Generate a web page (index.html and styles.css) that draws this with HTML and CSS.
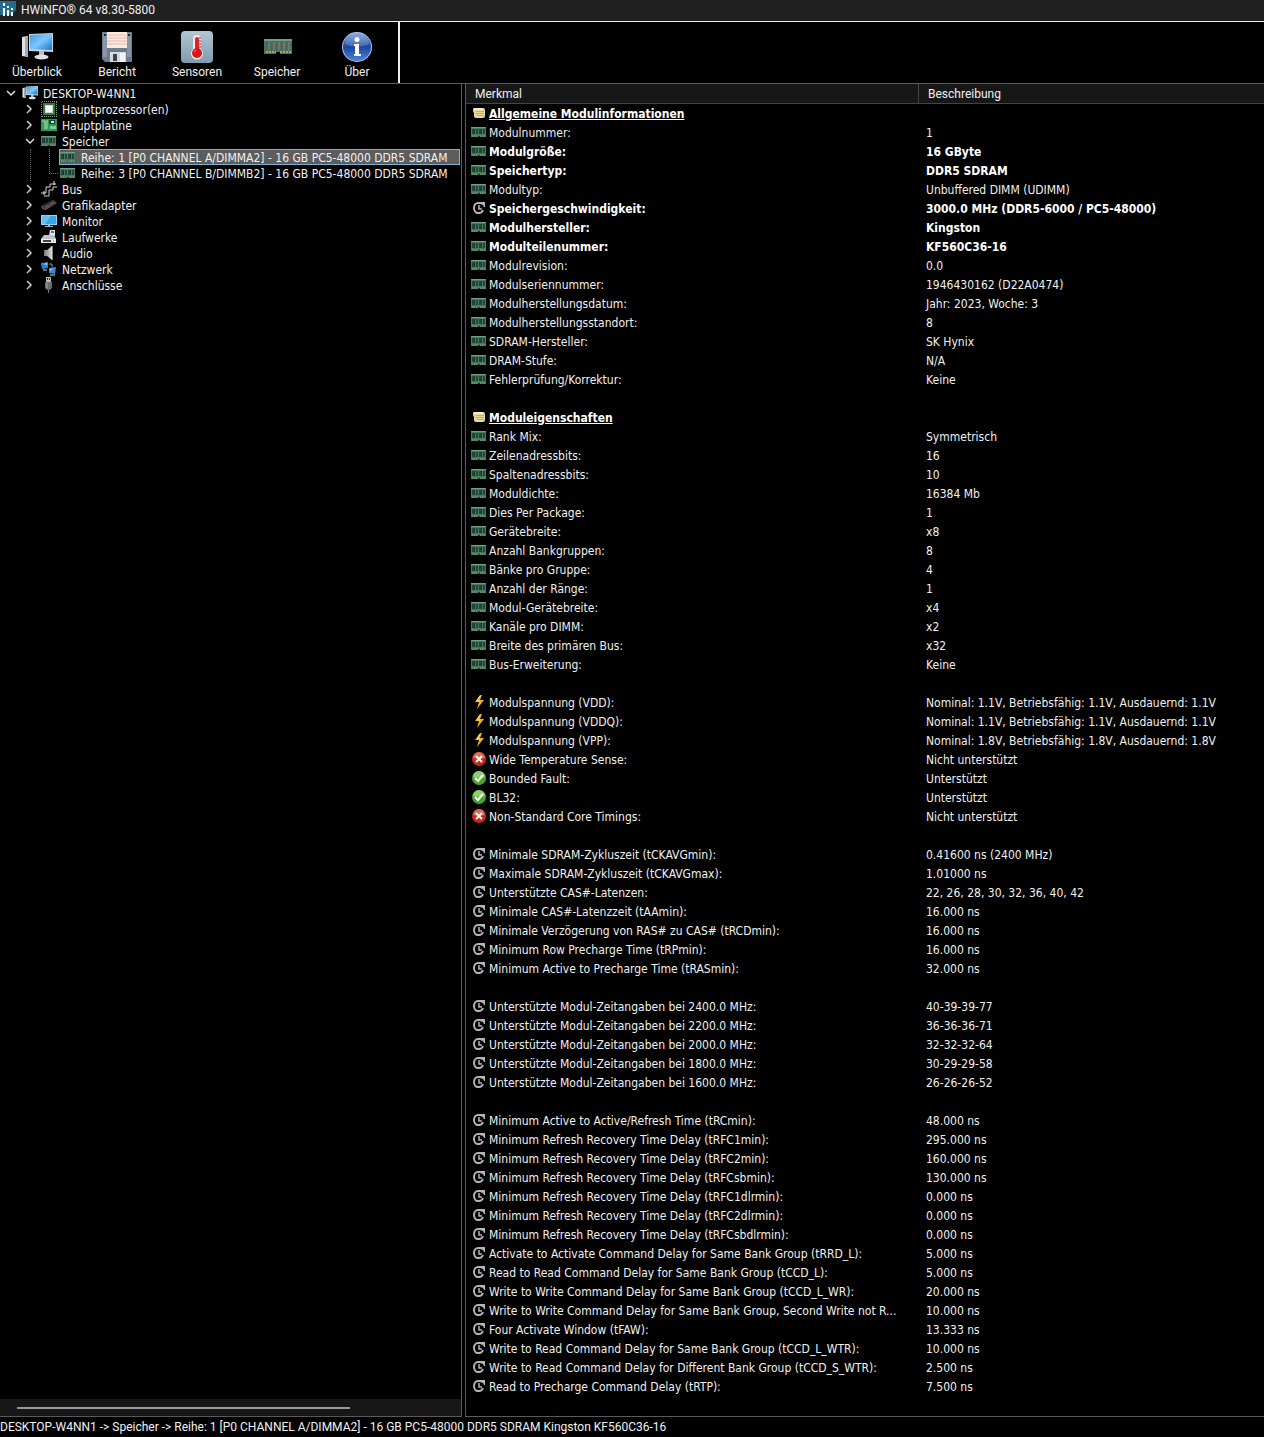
FILE: index.html
```html
<!DOCTYPE html>
<html lang="de">
<head>
  <meta charset="UTF-8">
  <meta name="viewport" content="width=device-width, initial-scale=1.0">
  <title>HWiNFO® 64 v8.30-5800</title>
  <link rel="stylesheet" href="styles.css">
</head>
<body>

<!-- Symbole -->
<svg class="sprite" aria-hidden="true">
  <defs>
    <linearGradient id="g-screen" x1="0" y1="0" x2="1" y2="1">
      <stop offset="0" stop-color="#3f9be6"/><stop offset=".5" stop-color="#7cc6fa"/><stop offset="1" stop-color="#1c71cc"/>
    </linearGradient>
    <linearGradient id="g-temp" x1="0" y1="0" x2="0" y2="1">
      <stop offset="0" stop-color="#b3c6d4"/><stop offset="1" stop-color="#7f9bb0"/>
    </linearGradient>
    <linearGradient id="g-info" x1="0" y1="0" x2="0" y2="1">
      <stop offset="0" stop-color="#6f97dc"/><stop offset=".5" stop-color="#1d479f"/><stop offset="1" stop-color="#4a86d8"/>
    </linearGradient>
    <linearGradient id="g-audio" x1="0" y1="0" x2="1" y2="0">
      <stop offset="0" stop-color="#777"/><stop offset="1" stop-color="#ddd"/>
    </linearGradient>
  </defs>
  <symbol id="logo" viewBox="0 0 16 16">
    <path d="M0 1h16v9l-5 5H0z" fill="#256b8b"/>
    <path d="M4 3v3M4 8v8M8 6v2M8 10v6M12 8v2M12 12v4" stroke="#fff" stroke-width="2"/>
  </symbol>
  <symbol id="pc" viewBox="0 0 32 32">
    <path d="M1 6l6-1v21l-6-1z" fill="#dfe3e6"/><path d="M4 6l3-1v21l-3-1z" fill="#a3abb2"/>
    <path d="M8 3l24-1v19L8 20z" fill="#c3d5e3"/>
    <path d="M9 4l22-1v16L9 18z" fill="url(#g-screen)"/>
    <path d="M18 20h5v5h-5z" fill="#b8c0c6"/><ellipse cx="20.500" cy="26" rx="7" ry="2.500" fill="#dde2e6"/>
  </symbol>
  <symbol id="disk" viewBox="0 0 32 32">
    <path d="M1 1h30v30H4l-3-3z" fill="#6d7c8e"/>
    <path d="M2 2h4v24H2zM26 2h4v24h-4z" fill="#8797a9"/>
    <path d="M6 1h20v16H6z" fill="#fae9e1"/>
    <path d="M6 4h20M6 7h20M6 10h20M6 13h20" stroke="#e6b8ab"/>
    <path d="M9 21h16v10H9z" fill="#d5dade"/><path d="M12 23h4v7h-4z" fill="#3c4651"/><path d="M19 22h5v9h-5z" fill="#f2f4f5"/>
    <path d="M3 3h2v2H3zM27 3h2v2h-2z" fill="#222"/>
  </symbol>
  <symbol id="temp" viewBox="0 0 32 32">
    <rect width="32" height="32" rx="4" fill="url(#g-temp)"/>
    <path d="M12 8a4 4 0 0 1 8 0v10a6 6 0 1 1-8 0z" fill="#f4e9e9"/>
    <path d="M14 8a2 2 0 0 1 4 0v11h-4z" fill="#e02327"/><circle cx="16" cy="22" r="5" fill="#d9151b"/>
    <path d="M18 7h2M18 10h2M18 13h2M18 16h2" stroke="#8d2b2b"/>
    <path d="M13 21a3 3 0 0 1 2-2" stroke="#ff8b8b" fill="none"/>
  </symbol>
  <symbol id="ram-big" viewBox="0 0 32 32">
    <path d="M3 8h28v15H19v-2h-4v2H3z" fill="#46755f"/>
    <path d="M3 9h28" stroke="#6c9d86" stroke-width="2"/>
    <path d="M5 11h4v8H5zM10 11h4v8h-4zM15 11h4v8h-4zM20 11h4v8h-4zM25 11h4v8h-4z" fill="#6b776f"/>
    <path d="M6 11v8M11 11v8M16 11v8M21 11v8M26 11v8" stroke="#3d4d45"/>
    <path d="M5 21h10M19 21h11" stroke="#baa04c" stroke-width="2" stroke-dasharray="2 1"/>
  </symbol>
  <symbol id="info" viewBox="0 0 32 32">
    <circle cx="16" cy="16" r="15" fill="#b1c5e8"/><circle cx="16" cy="16" r="14" fill="url(#g-info)"/>
    <path d="M4 13a12 11 0 0 1 24 0q-12 5-24 0z" fill="#fff" opacity=".18"/>
    <circle cx="16" cy="8.500" r="2.500" fill="#fff"/>
    <path d="M13 13h5v10h2v2h-7v-2h1v-8h-1z" fill="#fff"/>
  </symbol>
  <symbol id="ram" viewBox="0 0 16 16">
    <path d="M0 3h15v10H9l-1-1-1 1H0z" fill="#47795f"/>
    <path d="M0 3h15v1H0z" fill="#6f9f86"/>
    <path d="M1 5h3v5H1zM5 5h2v5H5zM8 5h3v5H8zM12 5h2v5h-2z" fill="#16392b"/>
    <path d="M2 5v5M6 5v5M9 5v5M13 5v5" stroke="#2f5b47"/>
    <path d="M1 12h6M9 12h5" stroke="#8aab87" stroke-dasharray="1 1"/>
  </symbol>
  <symbol id="cpu" viewBox="0 0 16 16">
    <path d="M1 .500h15M1 15.500h15M.500 1v15M15.500 1v15" stroke="#69a874" stroke-dasharray="1 1"/>
    <path d="M2 2h12v12H2z" fill="#3f7350"/><path d="M4 4h8v8H4z" fill="#c9dccb"/><path d="M5 5h6v6H5z" fill="#f5f8f5"/>
  </symbol>
  <symbol id="board" viewBox="0 0 16 16">
    <path d="M0 2h16v12H0z" fill="#2f9a57"/>
    <path d="M1 4h3v8M6 3v9" stroke="#b9e2bf" fill="none"/>
    <path d="M8 3h6v4H8z" fill="#123f27"/><path d="M9 9h6v3H9z" fill="#7fcb8d"/><path d="M10 4h3v2h-3z" fill="#d3ead6"/>
  </symbol>
  <symbol id="bus" viewBox="0 0 16 16">
    <path d="M0 12h5V6h4V3h6M3 15h5V9h4V6h4" stroke="#d2d2d2" fill="none"/>
    <path d="M13 0v4M3 10v4" stroke="#eee"/>
  </symbol>
  <symbol id="gpu" viewBox="0 0 16 16">
    <path d="M0 9l12-6 4 3-11 7-4-1z" fill="#59484b"/><path d="M1 9l11-6 3 1L4 11z" fill="#332b2d"/>
    <path d="M4 10l4-2M9 7l4-2" stroke="#85646a"/>
  </symbol>
  <symbol id="monitor" viewBox="0 0 16 16">
    <path d="M0 2h16v10H0z" fill="#8bd1f8"/><path d="M1 3h14v8H1z" fill="#35a4ea"/><path d="M1 3h9L4 11H1z" fill="#66c0f5"/>
    <path d="M7 12h2v1h3v1H4v-1h3z" fill="#a9b8c2"/>
  </symbol>
  <symbol id="drive" viewBox="0 0 16 16">
    <path d="M9 1h5v6H8z" fill="#dfe6ec"/><path d="M10 2h3v2h-3z" fill="#5c7488"/>
    <path d="M3 6h10l2 4H0z" fill="#bfc4c7"/><path d="M0 10h15v4H0z" fill="#e6e8e9"/><path d="M2 12h8" stroke="#444" stroke-width="2"/><path d="M12 12h1" stroke="#3ba454"/>
  </symbol>
  <symbol id="audio" viewBox="0 0 16 16">
    <path d="M3 5h3l5-4v14l-5-4H3z" fill="url(#g-audio)"/><path d="M11 1v14" stroke="#eee"/>
  </symbol>
  <symbol id="net" viewBox="0 0 16 16">
    <path d="M0 2l7-1v6l-6 1z" fill="#2f7fca"/><path d="M2 3l4-1v2z" fill="#9ad2f5"/><path d="M2 9h4" stroke="#cbd4da"/>
    <path d="M8 7l7-1-1 7-6-1z" fill="#3688d1"/><path d="M9 8l4-1-4 3z" fill="#9ad2f5"/><path d="M9 14h5" stroke="#cbd4da"/>
    <path d="M8 3h3v3" stroke="#8a98a2" fill="none"/>
  </symbol>
  <symbol id="port" viewBox="0 0 16 16">
    <path d="M5 0h5v5H5z" fill="#b9b9b9"/><path d="M6 1h1v2H6zM8 1h1v2H8z" fill="#333"/>
    <path d="M4 5h7v6l-2 2H6l-2-2z" fill="#6b6b6b"/><path d="M5 6h2v5H5z" fill="#8c8c8c"/><path d="M7.500 13v3" stroke="#777"/>
  </symbol>
  <symbol id="note" viewBox="0 0 16 16">
    <path d="M3 3h9q2 0 2 2v6q0 2-2 2H5q-2 0-2-2V8Q2 8 2 5z" fill="#e9d69b"/>
    <path d="M2 5q0-2 2-2h8v2z" fill="#f8edc7"/>
    <path d="M5 6.500h8M5 8.500h8M6 10.500h7" stroke="#c4ad70"/>
  </symbol>
  <symbol id="clock" viewBox="0 0 16 16">
    <path d="M9 3H7a4 5 0 0 0 0 10h1q3 0 4-3" stroke="#b5b5b5" stroke-width="2" fill="none"/>
    <path d="M9 2h5v5h-1l-1-2-3-1z" fill="#b5b5b5"/>
    <path d="M8 5v4h3" stroke="#b5b5b5" stroke-width="1.500" fill="none"/>
  </symbol>
  <symbol id="volt" viewBox="0 0 16 16">
    <path d="M9 1h2l-2 5h4L6 15l2-7H4z" fill="#eeb024"/><path d="M9 2L6 7h3" stroke="#fbdc72" fill="none"/>
  </symbol>
  <symbol id="no" viewBox="0 0 16 16">
    <circle cx="8" cy="8" r="7" fill="#c6261e"/><path d="M2 7a6 6 0 0 1 12 0q-6 2-12 0z" fill="#e06656"/>
    <path d="M5 5l6 6M11 5l-6 6" stroke="#fff" stroke-width="2"/>
  </symbol>
  <symbol id="yes" viewBox="0 0 16 16">
    <circle cx="8" cy="8" r="7" fill="#45a52d"/><path d="M2 7a6 6 0 0 1 12 0q-6 2-12 0z" fill="#8bd06c"/>
    <path d="M4 8l3 3 5-6" stroke="#fff" stroke-width="2" fill="none"/>
  </symbol>
  <symbol id="open" viewBox="0 0 10 10"><path d="M1 3l4 4 4-4" stroke="#ddd" stroke-width="1.500" fill="none"/></symbol>
  <symbol id="closed" viewBox="0 0 10 10"><path d="M2 1l4 4-4 4" stroke="#ccc" stroke-width="1.500" fill="none"/></symbol>
</svg>

<header class="titlebar">
  <svg class="icon"><use href="#logo"/></svg>
  <h1>HWiNFO® 64 v8.30-5800</h1>
</header>

<nav class="toolbar">
  <div class="tools">
    <button type="button"><svg><use href="#pc"/></svg>Überblick</button>
    <button type="button"><svg><use href="#disk"/></svg>Bericht</button>
    <button type="button"><svg><use href="#temp"/></svg>Sensoren</button>
    <button type="button"><svg><use href="#ram-big"/></svg>Speicher</button>
    <button type="button"><svg><use href="#info"/></svg>Über</button>
  </div>
</nav>

<main class="panes">
  <!-- Gerätebaum -->
  <aside class="sidebar">
    <ul class="tree">
      <li>
        <div class="node"><button type="button" aria-label="Zuklappen"><svg><use href="#open"/></svg></button><svg class="icon"><use href="#pc"/></svg><span>DESKTOP-W4NN1</span></div>
        <ul>
          <li><div class="node"><button type="button" aria-label="Aufklappen"><svg><use href="#closed"/></svg></button><svg class="icon"><use href="#cpu"/></svg><span>Hauptprozessor(en)</span></div></li>
          <li><div class="node"><button type="button" aria-label="Aufklappen"><svg><use href="#closed"/></svg></button><svg class="icon"><use href="#board"/></svg><span>Hauptplatine</span></div></li>
          <li>
            <div class="node"><button type="button" aria-label="Zuklappen"><svg><use href="#open"/></svg></button><svg class="icon"><use href="#ram"/></svg><span>Speicher</span></div>
            <ul class="modules">
              <li><div class="node selected"><svg class="icon"><use href="#ram"/></svg><span>Reihe: 1 [P0 CHANNEL A/DIMMA2] - 16 GB PC5-48000 DDR5 SDRAM</span></div></li>
              <li><div class="node"><svg class="icon"><use href="#ram"/></svg><span>Reihe: 3 [P0 CHANNEL B/DIMMB2] - 16 GB PC5-48000 DDR5 SDRAM</span></div></li>
            </ul>
          </li>
          <li><div class="node"><button type="button" aria-label="Aufklappen"><svg><use href="#closed"/></svg></button><svg class="icon"><use href="#bus"/></svg><span>Bus</span></div></li>
          <li><div class="node"><button type="button" aria-label="Aufklappen"><svg><use href="#closed"/></svg></button><svg class="icon"><use href="#gpu"/></svg><span>Grafikadapter</span></div></li>
          <li><div class="node"><button type="button" aria-label="Aufklappen"><svg><use href="#closed"/></svg></button><svg class="icon"><use href="#monitor"/></svg><span>Monitor</span></div></li>
          <li><div class="node"><button type="button" aria-label="Aufklappen"><svg><use href="#closed"/></svg></button><svg class="icon"><use href="#drive"/></svg><span>Laufwerke</span></div></li>
          <li><div class="node"><button type="button" aria-label="Aufklappen"><svg><use href="#closed"/></svg></button><svg class="icon"><use href="#audio"/></svg><span>Audio</span></div></li>
          <li><div class="node"><button type="button" aria-label="Aufklappen"><svg><use href="#closed"/></svg></button><svg class="icon"><use href="#net"/></svg><span>Netzwerk</span></div></li>
          <li><div class="node"><button type="button" aria-label="Aufklappen"><svg><use href="#closed"/></svg></button><svg class="icon"><use href="#port"/></svg><span>Anschlüsse</span></div></li>
        </ul>
      </li>
    </ul>
    <div class="scrollbar"><div class="thumb"></div></div>
  </aside>

  <!-- Eigenschaften des gewählten Moduls -->
  <section class="details">
    <table>
      <colgroup><col class="col-name"><col></colgroup>
      <thead>
        <tr><th>Merkmal</th><th>Beschreibung</th></tr>
      </thead>
      <tbody>
        <tr class="group"><td><svg class="icon"><use href="#note"/></svg><span>Allgemeine Modulinformationen</span></td><td></td></tr>
        <tr><td><svg class="icon"><use href="#ram"/></svg><span>Modulnummer:</span></td><td>1</td></tr>
        <tr class="strong"><td><svg class="icon"><use href="#ram"/></svg><span>Modulgröße:</span></td><td>16 GByte</td></tr>
        <tr class="strong"><td><svg class="icon"><use href="#ram"/></svg><span>Speichertyp:</span></td><td>DDR5 SDRAM</td></tr>
        <tr><td><svg class="icon"><use href="#ram"/></svg><span>Modultyp:</span></td><td>Unbuffered DIMM (UDIMM)</td></tr>
        <tr class="strong"><td><svg class="icon"><use href="#clock"/></svg><span>Speichergeschwindigkeit:</span></td><td>3000.0 MHz (DDR5-6000 / PC5-48000)</td></tr>
        <tr class="strong"><td><svg class="icon"><use href="#ram"/></svg><span>Modulhersteller:</span></td><td>Kingston</td></tr>
        <tr class="strong"><td><svg class="icon"><use href="#ram"/></svg><span>Modulteilenummer:</span></td><td>KF560C36-16</td></tr>
        <tr><td><svg class="icon"><use href="#ram"/></svg><span>Modulrevision:</span></td><td>0.0</td></tr>
        <tr><td><svg class="icon"><use href="#ram"/></svg><span>Modulseriennummer:</span></td><td>1946430162 (D22A0474)</td></tr>
        <tr><td><svg class="icon"><use href="#ram"/></svg><span>Modulherstellungsdatum:</span></td><td>Jahr: 2023, Woche: 3</td></tr>
        <tr><td><svg class="icon"><use href="#ram"/></svg><span>Modulherstellungsstandort:</span></td><td>8</td></tr>
        <tr><td><svg class="icon"><use href="#ram"/></svg><span>SDRAM-Hersteller:</span></td><td>SK Hynix</td></tr>
        <tr><td><svg class="icon"><use href="#ram"/></svg><span>DRAM-Stufe:</span></td><td>N/A</td></tr>
        <tr><td><svg class="icon"><use href="#ram"/></svg><span>Fehlerprüfung/Korrektur:</span></td><td>Keine</td></tr>
        <tr><td></td><td></td></tr>
        <tr class="group"><td><svg class="icon"><use href="#note"/></svg><span>Moduleigenschaften</span></td><td></td></tr>
        <tr><td><svg class="icon"><use href="#ram"/></svg><span>Rank Mix:</span></td><td>Symmetrisch</td></tr>
        <tr><td><svg class="icon"><use href="#ram"/></svg><span>Zeilenadressbits:</span></td><td>16</td></tr>
        <tr><td><svg class="icon"><use href="#ram"/></svg><span>Spaltenadressbits:</span></td><td>10</td></tr>
        <tr><td><svg class="icon"><use href="#ram"/></svg><span>Moduldichte:</span></td><td>16384 Mb</td></tr>
        <tr><td><svg class="icon"><use href="#ram"/></svg><span>Dies Per Package:</span></td><td>1</td></tr>
        <tr><td><svg class="icon"><use href="#ram"/></svg><span>Gerätebreite:</span></td><td>x8</td></tr>
        <tr><td><svg class="icon"><use href="#ram"/></svg><span>Anzahl Bankgruppen:</span></td><td>8</td></tr>
        <tr><td><svg class="icon"><use href="#ram"/></svg><span>Bänke pro Gruppe:</span></td><td>4</td></tr>
        <tr><td><svg class="icon"><use href="#ram"/></svg><span>Anzahl der Ränge:</span></td><td>1</td></tr>
        <tr><td><svg class="icon"><use href="#ram"/></svg><span>Modul-Gerätebreite:</span></td><td>x4</td></tr>
        <tr><td><svg class="icon"><use href="#ram"/></svg><span>Kanäle pro DIMM:</span></td><td>x2</td></tr>
        <tr><td><svg class="icon"><use href="#ram"/></svg><span>Breite des primären Bus:</span></td><td>x32</td></tr>
        <tr><td><svg class="icon"><use href="#ram"/></svg><span>Bus-Erweiterung:</span></td><td>Keine</td></tr>
        <tr><td></td><td></td></tr>
        <tr><td><svg class="icon"><use href="#volt"/></svg><span>Modulspannung (VDD):</span></td><td>Nominal: 1.1V, Betriebsfähig: 1.1V, Ausdauernd: 1.1V</td></tr>
        <tr><td><svg class="icon"><use href="#volt"/></svg><span>Modulspannung (VDDQ):</span></td><td>Nominal: 1.1V, Betriebsfähig: 1.1V, Ausdauernd: 1.1V</td></tr>
        <tr><td><svg class="icon"><use href="#volt"/></svg><span>Modulspannung (VPP):</span></td><td>Nominal: 1.8V, Betriebsfähig: 1.8V, Ausdauernd: 1.8V</td></tr>
        <tr><td><svg class="icon"><use href="#no"/></svg><span>Wide Temperature Sense:</span></td><td>Nicht unterstützt</td></tr>
        <tr><td><svg class="icon"><use href="#yes"/></svg><span>Bounded Fault:</span></td><td>Unterstützt</td></tr>
        <tr><td><svg class="icon"><use href="#yes"/></svg><span>BL32:</span></td><td>Unterstützt</td></tr>
        <tr><td><svg class="icon"><use href="#no"/></svg><span>Non-Standard Core Timings:</span></td><td>Nicht unterstützt</td></tr>
        <tr><td></td><td></td></tr>
        <tr><td><svg class="icon"><use href="#clock"/></svg><span>Minimale SDRAM-Zykluszeit (tCKAVGmin):</span></td><td>0.41600 ns (2400 MHz)</td></tr>
        <tr><td><svg class="icon"><use href="#clock"/></svg><span>Maximale SDRAM-Zykluszeit (tCKAVGmax):</span></td><td>1.01000 ns</td></tr>
        <tr><td><svg class="icon"><use href="#clock"/></svg><span>Unterstützte CAS#-Latenzen:</span></td><td>22, 26, 28, 30, 32, 36, 40, 42</td></tr>
        <tr><td><svg class="icon"><use href="#clock"/></svg><span>Minimale CAS#-Latenzzeit (tAAmin):</span></td><td>16.000 ns</td></tr>
        <tr><td><svg class="icon"><use href="#clock"/></svg><span>Minimale Verzögerung von RAS# zu CAS# (tRCDmin):</span></td><td>16.000 ns</td></tr>
        <tr><td><svg class="icon"><use href="#clock"/></svg><span>Minimum Row Precharge Time (tRPmin):</span></td><td>16.000 ns</td></tr>
        <tr><td><svg class="icon"><use href="#clock"/></svg><span>Minimum Active to Precharge Time (tRASmin):</span></td><td>32.000 ns</td></tr>
        <tr><td></td><td></td></tr>
        <tr><td><svg class="icon"><use href="#clock"/></svg><span>Unterstützte Modul-Zeitangaben bei 2400.0 MHz:</span></td><td>40-39-39-77</td></tr>
        <tr><td><svg class="icon"><use href="#clock"/></svg><span>Unterstützte Modul-Zeitangaben bei 2200.0 MHz:</span></td><td>36-36-36-71</td></tr>
        <tr><td><svg class="icon"><use href="#clock"/></svg><span>Unterstützte Modul-Zeitangaben bei 2000.0 MHz:</span></td><td>32-32-32-64</td></tr>
        <tr><td><svg class="icon"><use href="#clock"/></svg><span>Unterstützte Modul-Zeitangaben bei 1800.0 MHz:</span></td><td>30-29-29-58</td></tr>
        <tr><td><svg class="icon"><use href="#clock"/></svg><span>Unterstützte Modul-Zeitangaben bei 1600.0 MHz:</span></td><td>26-26-26-52</td></tr>
        <tr><td></td><td></td></tr>
        <tr><td><svg class="icon"><use href="#clock"/></svg><span>Minimum Active to Active/Refresh Time (tRCmin):</span></td><td>48.000 ns</td></tr>
        <tr><td><svg class="icon"><use href="#clock"/></svg><span>Minimum Refresh Recovery Time Delay (tRFC1min):</span></td><td>295.000 ns</td></tr>
        <tr><td><svg class="icon"><use href="#clock"/></svg><span>Minimum Refresh Recovery Time Delay (tRFC2min):</span></td><td>160.000 ns</td></tr>
        <tr><td><svg class="icon"><use href="#clock"/></svg><span>Minimum Refresh Recovery Time Delay (tRFCsbmin):</span></td><td>130.000 ns</td></tr>
        <tr><td><svg class="icon"><use href="#clock"/></svg><span>Minimum Refresh Recovery Time Delay (tRFC1dlrmin):</span></td><td>0.000 ns</td></tr>
        <tr><td><svg class="icon"><use href="#clock"/></svg><span>Minimum Refresh Recovery Time Delay (tRFC2dlrmin):</span></td><td>0.000 ns</td></tr>
        <tr><td><svg class="icon"><use href="#clock"/></svg><span>Minimum Refresh Recovery Time Delay (tRFCsbdlrmin):</span></td><td>0.000 ns</td></tr>
        <tr><td><svg class="icon"><use href="#clock"/></svg><span>Activate to Activate Command Delay for Same Bank Group (tRRD_L):</span></td><td>5.000 ns</td></tr>
        <tr><td><svg class="icon"><use href="#clock"/></svg><span>Read to Read Command Delay for Same Bank Group (tCCD_L):</span></td><td>5.000 ns</td></tr>
        <tr><td><svg class="icon"><use href="#clock"/></svg><span>Write to Write Command Delay for Same Bank Group (tCCD_L_WR):</span></td><td>20.000 ns</td></tr>
        <tr><td><svg class="icon"><use href="#clock"/></svg><span>Write to Write Command Delay for Same Bank Group, Second Write not R...</span></td><td>10.000 ns</td></tr>
        <tr><td><svg class="icon"><use href="#clock"/></svg><span>Four Activate Window (tFAW):</span></td><td>13.333 ns</td></tr>
        <tr><td><svg class="icon"><use href="#clock"/></svg><span>Write to Read Command Delay for Same Bank Group (tCCD_L_WTR):</span></td><td>10.000 ns</td></tr>
        <tr><td><svg class="icon"><use href="#clock"/></svg><span>Write to Read Command Delay for Different Bank Group (tCCD_S_WTR):</span></td><td>2.500 ns</td></tr>
        <tr><td><svg class="icon"><use href="#clock"/></svg><span>Read to Precharge Command Delay (tRTP):</span></td><td>7.500 ns</td></tr>
      </tbody>
    </table>
  </section>
</main>

<footer class="statusbar">DESKTOP-W4NN1 -&gt; Speicher -&gt; Reihe: 1 [P0 CHANNEL A/DIMMA2] - 16 GB PC5-48000 DDR5 SDRAM Kingston KF560C36-16</footer>

</body>
</html>
```
FILE: styles.css
```css
* {
  box-sizing: border-box;
}
body {
  margin: 0;
  min-height: 100vh;
  display: flex;
  flex-direction: column;
  background: #000;
  color: #f0f0f0;
  font-family: "DejaVu Sans Condensed", "DejaVu Sans", sans-serif;
  font-size: 12px;
  line-height: 16px;
  white-space: nowrap;
}
ul {
  list-style: none;
  margin: 0;
  padding: 0;
}
button {
  padding: 0;
  border: 0;
  background: none;
  color: inherit;
  font: inherit;
}
.sprite {
  position: absolute;
  width: 0;
  height: 0;
}
.icon {
  width: 16px;
  height: 16px;
  flex: none;
}
/* Titelleiste */
.titlebar {
  display: flex;
  gap: 5px;
  height: 22px;
  background: #202020;
  border-bottom: 1px solid #eee;
}
.titlebar h1 {
  margin: 0;
  font: 12px/20px Roboto, "Noto Sans", sans-serif;
}
/* Werkzeugleiste */
.toolbar {
  border-bottom: 1px solid #5a5a5a;
  font-family: Roboto, "Noto Sans", sans-serif;
}
.tools {
  display: flex;
  gap: 6px;
  width: 400px;
  height: 61px;
  padding-top: 9px;
  border-right: 2px solid #eee;
}
.tools button {
  width: 74px;
  display: flex;
  flex-direction: column;
  align-items: center;
  line-height: 18px;
}
.tools svg {
  width: 32px;
  height: 32px;
}
/* Hauptbereich */
.panes {
  flex: 1;
  display: grid;
  grid-template-columns: 462px 1fr;
  gap: 3px;
}
.sidebar {
  display: flex;
  flex-direction: column;
  border-right: 1px solid #5a5a5a;
  border-bottom: 1px solid #5a5a5a;
  overflow: hidden;
}
.tree {
  flex: 1;
  padding: 1px 1px 0 3px;
}
.tree ul {
  position: relative;
  padding-left: 19px;
}
.node {
  display: flex;
  align-items: center;
  height: 16px;
}
.node button {
  width: 16px;
  height: 16px;
  margin-right: 3px;
  display: flex;
  align-items: center;
  justify-content: center;
}
.node button svg {
  width: 10px;
  height: 10px;
}
.node span {
  padding: 2px 0 0 5px;
}
/* gepunktete Linien vor den Modulen */
.tree .modules {
  margin-left: 8px;
  padding-left: 28px;
  border-left: 1px dotted #666;
}
.modules::before {
  content: "";
  position: absolute;
  left: 18px;
  top: 0;
  height: 24px;
  width: 8px;
  border-left: 1px dotted #777;
  border-bottom: 1px dotted #777;
}
.modules .node {
  padding-left: 1px;
}
.selected {
  background: #5d5d5d;
  outline: 1px solid #7fb0cc;
  outline-offset: -1px;
}
.scrollbar {
  height: 17px;
  padding: 8px 111px 0 17px;
  background: #171717;
}
.thumb {
  height: 2px;
  background: #9a9a9a;
}
/* Tabelle */
.details {
  border-left: 1px solid #5a5a5a;
  border-bottom: 1px solid #5a5a5a;
}
table {
  width: 100%;
  table-layout: fixed;
  border-collapse: separate;
  border-spacing: 0;
}
.col-name {
  width: 453px;
}
th {
  height: 20px;
  padding: 0 9px;
  background: #171717;
  border-right: 1px solid #444;
  border-bottom: 1px solid #444;
  font-family: Roboto, "Noto Sans", sans-serif;
  font-weight: normal;
  text-align: left;
}
th:last-child {
  border-right: 0;
}
td {
  height: 19px;
  padding: 2px 4px 0 7px;
  line-height: 17px;
  overflow: hidden;
}
td:first-child {
  padding-left: 5px;
}
td .icon {
  margin-top: -1px;
  vertical-align: top;
}
td span {
  margin-left: 2px;
}
.strong,
.group {
  color: #fff;
  font-weight: bold;
}
.group span {
  text-decoration: underline;
}
.statusbar {
  height: 20px;
  line-height: 20px;
  font-family: Roboto, "Noto Sans", sans-serif;
}
```
